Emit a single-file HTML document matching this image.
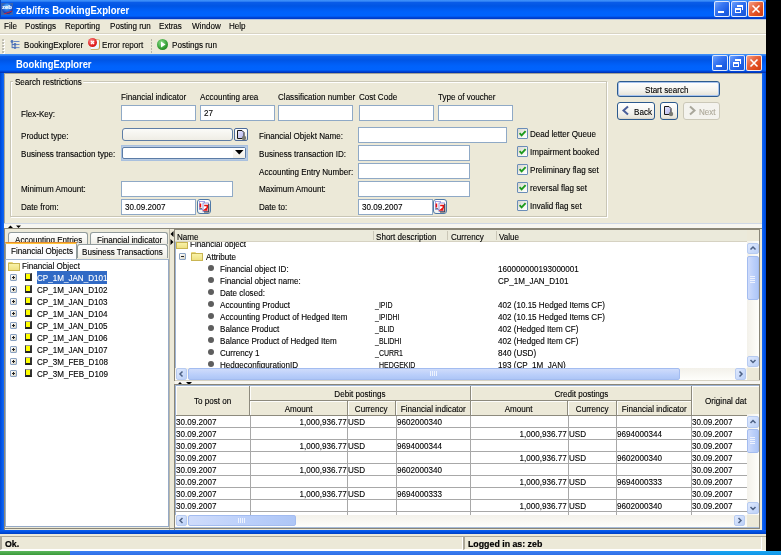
<!DOCTYPE html>
<html><head><meta charset="utf-8"><style>
*{box-sizing:border-box;margin:0;padding:0}
html,body{width:781px;height:555px;overflow:hidden;background:#000}
body{position:relative;font-family:"Liberation Sans",sans-serif;font-size:8.5px;color:#000;will-change:transform}
.a{position:absolute}
.t{position:absolute;white-space:nowrap;line-height:10px;transform:scaleX(0.95);transform-origin:0 0;-webkit-text-stroke:0.12px currentColor}
.ts{display:inline-block;white-space:nowrap;line-height:10px;transform:scaleX(0.95);-webkit-text-stroke:0.12px currentColor}
.tb{background:linear-gradient(#3d8ff9 0,#3a8cf8 1px,#0a5ce8 2.5px,#0055e4 6px,#005cf2 9px,#0062fb 12px,#0063fd 16px,#0045d6 17.5px,#0039c4 19px)}
.inp{position:absolute;background:#fff;border:1px solid #8fa9c6}
.xb{position:absolute;width:15px;height:15px;border:1px solid rgba(255,255,255,0.85);border-radius:2px;background:linear-gradient(135deg,#6fa2fb 0,#3b78f2 35%,#1e5fe6 70%,#1a56d6)}
.xc{background:linear-gradient(135deg,#f4a088 0,#e86a45 35%,#e04a1c 70%,#cc3f17)}
.cb{position:absolute;width:11px;height:11px;border:1px solid #6a8db8;border-radius:1px;background:linear-gradient(135deg,#d6d6cd,#f7f7f3 70%,#fff)}
.btn{position:absolute;border:1px solid #2c5a8e;border-radius:3px;background:linear-gradient(#fff,#f4f3ee 60%,#e8e6dc 90%,#d6d0c5)}
.sbb{position:absolute;background:linear-gradient(135deg,#dfe9fd,#bcd1f8);border:1px solid #b7cbf1;border-radius:2px}
.sbt{position:absolute;background:linear-gradient(90deg,#cfdcfb,#b9cefa 60%,#aec6f6);border:1px solid #a3bcf0;border-radius:2px}
</style></head><body>
<div class="a" style="left:0px;top:0px;width:766px;height:551px;background:#ece9d8"></div>
<div class="a tb" style="left:0px;top:0px;width:766px;height:19px;"></div>
<div class="a" style="left:0px;top:0px;width:1px;height:19px;background:#0841b8"></div>
<div class="a" style="left:0px;top:19px;width:766px;height:1px;background:#b9c6dc"></div>
<div class="a" style="left:1px;top:3px;width:12px;height:12px;background:#3a66b0"></div>
<div class="a" style="left:2px;top:3px;width:11px;height:11px;border-radius:50%;background:radial-gradient(circle at 45% 35%,#7fd0ff 0,#2a7ae8 35%,#1436b0 70%,#0b2a90)"></div>
<div class="t" style="left:2px;top:4px;font-size:6px;font-weight:bold;color:#fff;line-height:7px;transform:none">zeb</div>
<div class="a" style="left:4px;top:12px;width:8px;height:1px;background:#e02020;transform:rotate(-20deg)"></div>
<div class="t" style="left:16px;top:4.5px;font-size:10.2px;font-weight:bold;color:#fff;line-height:11px;transform:scaleX(0.94);-webkit-text-stroke:0">zeb/ifrs BookingExplorer</div>
<div class="xb" style="left:714px;top:1px;width:16px;height:16px;"></div>
<div class="a" style="left:718px;top:11px;width:6px;height:2px;background:#fff"></div>
<div class="xb" style="left:731px;top:1px;width:16px;height:16px;"></div>
<div class="a" style="left:735px;top:8px;width:6px;height:5px;border:1px solid #fff;border-top-width:2px"></div>
<div class="a" style="left:737px;top:5px;width:6px;height:5px;border:1px solid #fff;border-top-width:2px;border-left:none;border-bottom:none"></div>
<div class="xb xc" style="left:748px;top:1px;width:16px;height:16px;"></div>
<svg class="a" style="left:748px;top:1px" width="16" height="16"><path d="M4.5 4.5L11.5 11.5M11.5 4.5L4.5 11.5" stroke="#fff" stroke-width="1.6"/></svg>
<div class="t" style="left:4px;top:21px;">File</div>
<div class="t" style="left:25px;top:21px;">Postings</div>
<div class="t" style="left:65px;top:21px;">Reporting</div>
<div class="t" style="left:110px;top:21px;">Posting run</div>
<div class="t" style="left:159px;top:21px;">Extras</div>
<div class="t" style="left:192px;top:21px;">Window</div>
<div class="t" style="left:229px;top:21px;">Help</div>
<div class="a" style="left:0px;top:33px;width:766px;height:1px;background:#d8d4c4"></div>
<div class="a" style="left:0px;top:34px;width:766px;height:1px;background:#fff"></div>
<div class="a" style="left:2px;top:39px;width:2px;height:2px;background:#c1bfb3;box-shadow:1px 1px 0 #fff"></div>
<div class="a" style="left:2px;top:42px;width:2px;height:2px;background:#c1bfb3;box-shadow:1px 1px 0 #fff"></div>
<div class="a" style="left:2px;top:45px;width:2px;height:2px;background:#c1bfb3;box-shadow:1px 1px 0 #fff"></div>
<div class="a" style="left:2px;top:48px;width:2px;height:2px;background:#c1bfb3;box-shadow:1px 1px 0 #fff"></div>
<div class="a" style="left:2px;top:51px;width:2px;height:2px;background:#c1bfb3;box-shadow:1px 1px 0 #fff"></div>
<svg class="a" style="left:10px;top:39px" width="12" height="11"><g fill="#5073b8"><circle cx="2" cy="2.5" r="1.4"/><rect x="1.6" y="2.5" width="1" height="6.6"/><circle cx="5" cy="5.5" r="1.4"/><circle cx="5" cy="8.6" r="1.4"/><rect x="2" y="5" width="3" height="1"/><rect x="2" y="8.1" width="3" height="1"/><rect x="3.5" y="2" width="6" height="1" fill="#6b8ac6"/><rect x="6" y="5" width="3.5" height="1" fill="#6b8ac6"/><rect x="6" y="8.1" width="3.5" height="1" fill="#6b8ac6"/></g></svg>
<div class="t" style="left:24px;top:40px;">BookingExplorer</div>
<div class="a" style="left:90px;top:39px;width:10px;height:11px;background:linear-gradient(135deg,#fff,#e4f4fb);border:1px solid #d9e6ea;border-right:1px solid #c8a050;border-top-color:#d8c089;border-bottom:1px solid #c8b070;border-radius:1px 2px 3px 1px"></div>
<div class="a" style="left:88px;top:38px;width:9px;height:9px;border-radius:50%;background:radial-gradient(circle at 40% 35%,#ff9a9a,#e01c1c 60%,#b80a0a)"></div>
<svg class="a" style="left:88px;top:38px" width="9" height="9"><path d="M3 3L6 6M6 3L3 6" stroke="#fff" stroke-width="1.2"/></svg>
<div class="t" style="left:102px;top:40px;">Error report</div>
<div class="a" style="left:151px;top:39px;width:1px;height:2px;background:#b8b6aa"></div>
<div class="a" style="left:151px;top:42px;width:1px;height:2px;background:#b8b6aa"></div>
<div class="a" style="left:151px;top:45px;width:1px;height:2px;background:#b8b6aa"></div>
<div class="a" style="left:151px;top:48px;width:1px;height:2px;background:#b8b6aa"></div>
<div class="a" style="left:151px;top:51px;width:1px;height:2px;background:#b8b6aa"></div>
<div class="a" style="left:157px;top:39px;width:11px;height:11px;border-radius:50%;background:radial-gradient(circle at 40% 35%,#8fe08f,#2f9a2f 60%,#1a6e1a)"></div>
<svg class="a" style="left:157px;top:39px" width="11" height="11"><path d="M4 2.5L8.5 5.5L4 8.5Z" fill="#fff"/></svg>
<div class="t" style="left:172px;top:40px;">Postings run</div>
<div class="a" style="left:0px;top:54px;width:766px;height:482px;background:#0054e3"></div>
<div class="a tb" style="left:0px;top:54px;width:766px;height:19px;"></div>
<div class="a" style="left:0px;top:72px;width:766px;height:1px;background:#0036b8"></div>
<div class="t" style="left:15.5px;top:58.5px;font-size:10.2px;font-weight:bold;color:#fff;line-height:11px;transform:scaleX(0.92);-webkit-text-stroke:0">BookingExplorer</div>
<div class="xb" style="left:712px;top:55px;width:16px;height:16px;"></div>
<div class="a" style="left:716px;top:65px;width:6px;height:2px;background:#fff"></div>
<div class="xb" style="left:729px;top:55px;width:16px;height:16px;"></div>
<div class="a" style="left:733px;top:62px;width:6px;height:5px;border:1px solid #fff;border-top-width:2px"></div>
<div class="a" style="left:735px;top:59px;width:6px;height:5px;border:1px solid #fff;border-top-width:2px;border-left:none;border-bottom:none"></div>
<div class="xb xc" style="left:746px;top:55px;width:16px;height:16px;"></div>
<svg class="a" style="left:746px;top:55px" width="16" height="16"><path d="M4.5 4.5L11.5 11.5M11.5 4.5L4.5 11.5" stroke="#fff" stroke-width="1.6"/></svg>
<div class="a" style="left:0px;top:73px;width:4px;height:457px;background:linear-gradient(90deg,#0045cf,#0058ee 50%,#1767f0)"></div>
<div class="a" style="left:762px;top:73px;width:4px;height:457px;background:linear-gradient(90deg,#1767f0,#0058ee 50%,#0045cf)"></div>
<div class="a" style="left:4px;top:73px;width:758px;height:457px;background:#ece9d8"></div>
<div class="a" style="left:4px;top:73px;width:758px;height:1px;background:#a7a597"></div>
<div class="a" style="left:4px;top:73px;width:1px;height:457px;background:#a7a597"></div>
<div class="a" style="left:10px;top:81px;width:597px;height:136px;border:1px solid #c9c6b6;box-shadow:inset 1px 1px 0 #fff,1px 1px 0 #fff"></div>
<div class="t" style="left:13px;top:77px;padding:0 2px;background:#ece9d8">Search restrictions</div>
<div class="t" style="left:121px;top:92px;">Financial indicator</div>
<div class="t" style="left:200px;top:92px;">Accounting area</div>
<div class="t" style="left:278px;top:92px;">Classification number</div>
<div class="t" style="left:359px;top:92px;">Cost Code</div>
<div class="t" style="left:438px;top:92px;">Type of voucher</div>
<div class="t" style="left:21px;top:109px;">Flex-Key:</div>
<div class="inp" style="left:121px;top:105px;width:75px;height:16px"></div>
<div class="inp" style="left:200px;top:105px;width:75px;height:16px"></div>
<div class="inp" style="left:278px;top:105px;width:75px;height:16px"></div>
<div class="inp" style="left:359px;top:105px;width:75px;height:16px"></div>
<div class="inp" style="left:438px;top:105px;width:75px;height:16px"></div>
<div class="t" style="left:204px;top:108px;">27</div>
<div class="t" style="left:21px;top:131px;">Product type:</div>
<div class="inp" style="left:122px;top:128px;width:111px;height:13px;border-radius:3px;background:linear-gradient(#fbfbf8,#efede5);border-color:#5e7ea6"></div>
<div class="a" style="left:234px;top:128px;width:14px;height:13px;border:1px solid #4b6a9a;border-radius:2px;background:linear-gradient(#fff,#eceae0)"></div>
<svg class="a" style="left:236px;top:129px" width="11" height="12"><defs><linearGradient id="pg" x1="0" y1="0" x2="1" y2="1"><stop offset="0" stop-color="#e6e6ff"/><stop offset="1" stop-color="#b4b4ea"/></linearGradient></defs><path d="M1.5 1.5H6L8 3.5V9.5H1.5Z" fill="url(#pg)" stroke="#1a1a1a" stroke-width="1"/><circle cx="8" cy="9" r="2.2" fill="#7a7a72"/></svg>
<div class="t" style="left:21px;top:149px;">Business transaction type:</div>
<div class="inp" style="left:121px;top:145px;width:127px;height:16px;border-color:#a9c0de;background:#b9cce4"></div>
<div class="a" style="left:122px;top:147px;width:124px;height:12px;border:1px solid #5c7ca6;border-radius:2px;background:#fff"></div>
<div class="a" style="left:233px;top:148px;width:12px;height:10px;background:linear-gradient(#fefefe,#f1eee6)"></div>
<svg class="a" style="left:235px;top:150px" width="9" height="5"><path d="M0 0H8.5L4.25 4.5Z" fill="#000"/></svg>
<div class="t" style="left:21px;top:184px;">Minimum Amount:</div>
<div class="inp" style="left:121px;top:181px;width:112px;height:16px"></div>
<div class="t" style="left:21px;top:202px;">Date from:</div>
<div class="inp" style="left:121px;top:199px;width:75px;height:16px"></div>
<div class="t" style="left:125px;top:201.5px;">30.09.2007</div>
<div class="a" style="left:197px;top:199px;width:14px;height:15px;border:1px solid #4f79a8;border-radius:3px;background:linear-gradient(#fff,#f3f3f0)"></div>
<svg class="a" style="left:197px;top:199px" width="14" height="15"><rect x="2.5" y="2.5" width="5" height="8" fill="#fff" stroke="#8f8fe0" stroke-width="0.8"/><rect x="2.6" y="4.5" width="1.6" height="4" fill="#e81010"/><rect x="2.6" y="9" width="2.5" height="1.2" fill="#777"/><rect x="6" y="4" width="5.5" height="8.5" fill="#fff" stroke="#7a7ad0" stroke-width="0.8"/><path d="M11.8 5V13H7" stroke="#333" stroke-width="1" fill="none"/><path d="M7.2 6.5H10.3V8.8L7.6 11H10.6" stroke="#e81010" stroke-width="1.5" fill="none"/></svg>
<div class="t" style="left:259px;top:131px;">Financial Objekt Name:</div>
<div class="inp" style="left:358px;top:127px;width:149px;height:16px"></div>
<div class="t" style="left:259px;top:149px;">Business transaction ID:</div>
<div class="inp" style="left:358px;top:145px;width:112px;height:16px"></div>
<div class="t" style="left:259px;top:167px;">Accounting Entry Number:</div>
<div class="inp" style="left:358px;top:163px;width:112px;height:16px"></div>
<div class="t" style="left:259px;top:184px;">Maximum Amount:</div>
<div class="inp" style="left:358px;top:181px;width:112px;height:16px"></div>
<div class="t" style="left:259px;top:202px;">Date to:</div>
<div class="inp" style="left:358px;top:199px;width:75px;height:16px"></div>
<div class="t" style="left:362px;top:201.5px;">30.09.2007</div>
<div class="a" style="left:433px;top:199px;width:14px;height:15px;border:1px solid #4f79a8;border-radius:3px;background:linear-gradient(#fff,#f3f3f0)"></div>
<svg class="a" style="left:433px;top:199px" width="14" height="15"><rect x="2.5" y="2.5" width="5" height="8" fill="#fff" stroke="#8f8fe0" stroke-width="0.8"/><rect x="2.6" y="4.5" width="1.6" height="4" fill="#e81010"/><rect x="2.6" y="9" width="2.5" height="1.2" fill="#777"/><rect x="6" y="4" width="5.5" height="8.5" fill="#fff" stroke="#7a7ad0" stroke-width="0.8"/><path d="M11.8 5V13H7" stroke="#333" stroke-width="1" fill="none"/><path d="M7.2 6.5H10.3V8.8L7.6 11H10.6" stroke="#e81010" stroke-width="1.5" fill="none"/></svg>
<div class="cb" style="left:517px;top:128px;width:11px;height:11px;"></div>
<svg class="a" style="left:517px;top:128px" width="11" height="11"><path d="M2.6 5.2L4.6 7.3L8.6 3.2" stroke="#1c9a1c" stroke-width="1.9" fill="none"/></svg>
<div class="t" style="left:530px;top:129px;">Dead letter Queue</div>
<div class="cb" style="left:517px;top:146px;width:11px;height:11px;"></div>
<svg class="a" style="left:517px;top:146px" width="11" height="11"><path d="M2.6 5.2L4.6 7.3L8.6 3.2" stroke="#1c9a1c" stroke-width="1.9" fill="none"/></svg>
<div class="t" style="left:530px;top:147px;">Impairment booked</div>
<div class="cb" style="left:517px;top:164px;width:11px;height:11px;"></div>
<svg class="a" style="left:517px;top:164px" width="11" height="11"><path d="M2.6 5.2L4.6 7.3L8.6 3.2" stroke="#1c9a1c" stroke-width="1.9" fill="none"/></svg>
<div class="t" style="left:530px;top:165px;">Preliminary flag set</div>
<div class="cb" style="left:517px;top:182px;width:11px;height:11px;"></div>
<svg class="a" style="left:517px;top:182px" width="11" height="11"><path d="M2.6 5.2L4.6 7.3L8.6 3.2" stroke="#1c9a1c" stroke-width="1.9" fill="none"/></svg>
<div class="t" style="left:530px;top:183px;">reversal flag set</div>
<div class="cb" style="left:517px;top:200px;width:11px;height:11px;"></div>
<svg class="a" style="left:517px;top:200px" width="11" height="11"><path d="M2.6 5.2L4.6 7.3L8.6 3.2" stroke="#1c9a1c" stroke-width="1.9" fill="none"/></svg>
<div class="t" style="left:530px;top:201px;">Invalid flag set</div>
<div class="btn" style="left:617px;top:81px;width:103px;height:16px;box-shadow:inset 0 0 0 1px #a8c4ef"></div>
<div class="t" style="left:645px;top:85px;">Start search</div>
<div class="btn" style="left:617px;top:102px;width:38px;height:18px;"></div>
<svg class="a" style="left:620px;top:104px" width="12" height="13"><path d="M8 2.5L3.5 6.5L8 10.5" stroke="#4a5f9a" stroke-width="2" fill="none"/></svg>
<div class="t" style="left:634px;top:107px;">Back</div>
<div class="btn" style="left:660px;top:102px;width:18px;height:18px;"></div>
<svg class="a" style="left:663px;top:105px" width="11" height="12"><path d="M1.5 1.5H6L8 3.5V9.5H1.5Z" fill="url(#pg)" stroke="#1a1a1a" stroke-width="1"/><circle cx="8" cy="9" r="2.2" fill="#7a7a72"/></svg>
<div class="a" style="left:683px;top:102px;width:37px;height:18px;border:1px solid #cbc8b8;border-radius:3px;background:#f4f3ee"></div>
<svg class="a" style="left:686px;top:104px" width="12" height="13"><path d="M4 2.5L8.5 6.5L4 10.5" stroke="#a9a79b" stroke-width="2" fill="none"/></svg>
<div class="t" style="left:699px;top:107px;color:#aca899">Next</div>
<div class="a" style="left:4px;top:223px;width:758px;height:1px;background:#cfd8e6"></div>
<div class="a" style="left:4px;top:224px;width:758px;height:4px;background:#f7f6f1"></div>
<svg class="a" style="left:6px;top:225px" width="20" height="4"><path d="M2 3H7L4.5 0.5Z M10 0.5H15L12.5 3Z" fill="#000"/></svg>
<div class="a" style="left:4px;top:228px;width:758px;height:1px;background:#8a8678"></div>
<div class="a" style="left:4px;top:229px;width:1px;height:301px;background:#8a8678"></div>
<div class="a" style="left:169px;top:229px;width:1px;height:301px;background:#b9b6a8"></div>
<div class="a" style="left:8px;top:232px;width:80px;height:12px;border:1px solid #919b9c;border-bottom:none;border-radius:3px 3px 0 0;background:linear-gradient(#fff,#f5f4ef 70%,#ecebe4)"></div>
<div class="t" style="left:15px;top:235px;">Accounting Entries</div>
<div class="a" style="left:90px;top:232px;width:78px;height:12px;border:1px solid #919b9c;border-bottom:none;border-radius:3px 3px 0 0;background:linear-gradient(#fff,#f5f4ef 70%,#ecebe4)"></div>
<div class="t" style="left:97px;top:235px;">Financial indicator</div>
<div class="a" style="left:77px;top:244px;width:91px;height:14px;border:1px solid #919b9c;border-bottom:none;border-radius:3px 3px 0 0;background:linear-gradient(#fff,#f5f4ef 70%,#ecebe4)"></div>
<div class="t" style="left:82px;top:247px;">Business Transactions</div>
<div class="a" style="left:5px;top:242px;width:72px;height:17px;border-left:1px solid #919b9c;border-right:1px solid #919b9c;background:#fcfcfe;border-radius:3px 3px 0 0"></div>
<div class="a" style="left:5px;top:242px;width:72px;height:1px;background:#e68b2c;border-radius:3px 3px 0 0"></div>
<div class="a" style="left:6px;top:243px;width:70px;height:1px;background:#ffc73c"></div>
<div class="t" style="left:11px;top:246px;">Financial Objects</div>
<div class="a" style="left:5px;top:259px;width:164px;height:268px;background:#fff;border:1px solid #95a9c6;border-top-color:#a5b7cf"></div>
<div class="a" style="left:8px;top:262px;width:5px;height:2px;background:#e8d87a;border-radius:1px 1px 0 0"></div>
<div class="a" style="left:8px;top:263px;width:12px;height:8px;background:linear-gradient(#f8f2a8,#efe182);border:1px solid #c9b553"></div>
<div class="t" style="left:22px;top:261px;">Financial Object</div>
<div class="a" style="left:10px;top:274px;width:7px;height:7px;border:1px solid #8aa2c2;border-radius:1px;background:linear-gradient(135deg,#fff,#d8d4c4)"></div>
<div class="a" style="left:12px;top:277px;width:3px;height:1px;background:#222"></div>
<div class="a" style="left:13px;top:276px;width:1px;height:3px;background:#222"></div>
<div class="a" style="left:25px;top:273px;width:7px;height:8px;background:#ffff00;border:1px solid #9a9a9a;border-left:1px solid #333;border-right:2px solid #333;border-bottom:2px solid #222"></div>
<div class="a" style="left:37px;top:271px;width:70px;height:13px;background:#316ac5"></div>
<div class="t" style="left:37px;top:273px;color:#fff">CP_1M_JAN_D101</div>
<div class="a" style="left:10px;top:286px;width:7px;height:7px;border:1px solid #8aa2c2;border-radius:1px;background:linear-gradient(135deg,#fff,#d8d4c4)"></div>
<div class="a" style="left:12px;top:289px;width:3px;height:1px;background:#222"></div>
<div class="a" style="left:13px;top:288px;width:1px;height:3px;background:#222"></div>
<div class="a" style="left:25px;top:285px;width:7px;height:8px;background:#ffff00;border:1px solid #9a9a9a;border-left:1px solid #333;border-right:2px solid #333;border-bottom:2px solid #222"></div>
<div class="t" style="left:37px;top:285px;">CP_1M_JAN_D102</div>
<div class="a" style="left:10px;top:298px;width:7px;height:7px;border:1px solid #8aa2c2;border-radius:1px;background:linear-gradient(135deg,#fff,#d8d4c4)"></div>
<div class="a" style="left:12px;top:301px;width:3px;height:1px;background:#222"></div>
<div class="a" style="left:13px;top:300px;width:1px;height:3px;background:#222"></div>
<div class="a" style="left:25px;top:297px;width:7px;height:8px;background:#ffff00;border:1px solid #9a9a9a;border-left:1px solid #333;border-right:2px solid #333;border-bottom:2px solid #222"></div>
<div class="t" style="left:37px;top:297px;">CP_1M_JAN_D103</div>
<div class="a" style="left:10px;top:310px;width:7px;height:7px;border:1px solid #8aa2c2;border-radius:1px;background:linear-gradient(135deg,#fff,#d8d4c4)"></div>
<div class="a" style="left:12px;top:313px;width:3px;height:1px;background:#222"></div>
<div class="a" style="left:13px;top:312px;width:1px;height:3px;background:#222"></div>
<div class="a" style="left:25px;top:309px;width:7px;height:8px;background:#ffff00;border:1px solid #9a9a9a;border-left:1px solid #333;border-right:2px solid #333;border-bottom:2px solid #222"></div>
<div class="t" style="left:37px;top:309px;">CP_1M_JAN_D104</div>
<div class="a" style="left:10px;top:322px;width:7px;height:7px;border:1px solid #8aa2c2;border-radius:1px;background:linear-gradient(135deg,#fff,#d8d4c4)"></div>
<div class="a" style="left:12px;top:325px;width:3px;height:1px;background:#222"></div>
<div class="a" style="left:13px;top:324px;width:1px;height:3px;background:#222"></div>
<div class="a" style="left:25px;top:321px;width:7px;height:8px;background:#ffff00;border:1px solid #9a9a9a;border-left:1px solid #333;border-right:2px solid #333;border-bottom:2px solid #222"></div>
<div class="t" style="left:37px;top:321px;">CP_1M_JAN_D105</div>
<div class="a" style="left:10px;top:334px;width:7px;height:7px;border:1px solid #8aa2c2;border-radius:1px;background:linear-gradient(135deg,#fff,#d8d4c4)"></div>
<div class="a" style="left:12px;top:337px;width:3px;height:1px;background:#222"></div>
<div class="a" style="left:13px;top:336px;width:1px;height:3px;background:#222"></div>
<div class="a" style="left:25px;top:333px;width:7px;height:8px;background:#ffff00;border:1px solid #9a9a9a;border-left:1px solid #333;border-right:2px solid #333;border-bottom:2px solid #222"></div>
<div class="t" style="left:37px;top:333px;">CP_1M_JAN_D106</div>
<div class="a" style="left:10px;top:346px;width:7px;height:7px;border:1px solid #8aa2c2;border-radius:1px;background:linear-gradient(135deg,#fff,#d8d4c4)"></div>
<div class="a" style="left:12px;top:349px;width:3px;height:1px;background:#222"></div>
<div class="a" style="left:13px;top:348px;width:1px;height:3px;background:#222"></div>
<div class="a" style="left:25px;top:345px;width:7px;height:8px;background:#ffff00;border:1px solid #9a9a9a;border-left:1px solid #333;border-right:2px solid #333;border-bottom:2px solid #222"></div>
<div class="t" style="left:37px;top:345px;">CP_1M_JAN_D107</div>
<div class="a" style="left:10px;top:358px;width:7px;height:7px;border:1px solid #8aa2c2;border-radius:1px;background:linear-gradient(135deg,#fff,#d8d4c4)"></div>
<div class="a" style="left:12px;top:361px;width:3px;height:1px;background:#222"></div>
<div class="a" style="left:13px;top:360px;width:1px;height:3px;background:#222"></div>
<div class="a" style="left:25px;top:357px;width:7px;height:8px;background:#ffff00;border:1px solid #9a9a9a;border-left:1px solid #333;border-right:2px solid #333;border-bottom:2px solid #222"></div>
<div class="t" style="left:37px;top:357px;">CP_3M_FEB_D108</div>
<div class="a" style="left:10px;top:370px;width:7px;height:7px;border:1px solid #8aa2c2;border-radius:1px;background:linear-gradient(135deg,#fff,#d8d4c4)"></div>
<div class="a" style="left:12px;top:373px;width:3px;height:1px;background:#222"></div>
<div class="a" style="left:13px;top:372px;width:1px;height:3px;background:#222"></div>
<div class="a" style="left:25px;top:369px;width:7px;height:8px;background:#ffff00;border:1px solid #9a9a9a;border-left:1px solid #333;border-right:2px solid #333;border-bottom:2px solid #222"></div>
<div class="t" style="left:37px;top:369px;">CP_3M_FEB_D109</div>
<svg class="a" style="left:170px;top:230px" width="4" height="16"><path d="M3.5 1V7L0.5 4Z M0.5 9V15L3.5 12Z" fill="#000"/></svg>
<div class="a" style="left:174px;top:229px;width:1px;height:152px;background:#8a8678"></div>
<div class="a" style="left:175px;top:229px;width:585px;height:152px;background:#ece9d8"></div>
<div class="a" style="left:175px;top:229px;width:585px;height:1px;background:#8a8678"></div>
<div class="a" style="left:175px;top:230px;width:572px;height:138px;background:#fff;border-left:1px solid #9db3d3"></div>
<div class="a" style="left:175px;top:230px;width:572px;height:12px;background:#ebeadb;border-bottom:1px solid #d6d2c2"></div>
<div class="a" style="left:373px;top:231px;width:1px;height:9px;background:#cac7b7"></div>
<div class="a" style="left:447px;top:231px;width:1px;height:9px;background:#cac7b7"></div>
<div class="a" style="left:496px;top:231px;width:1px;height:9px;background:#cac7b7"></div>
<div class="t" style="left:177px;top:232px;">Name</div>
<div class="t" style="left:376px;top:232px;">Short description</div>
<div class="t" style="left:451px;top:232px;">Currency</div>
<div class="t" style="left:499px;top:232px;">Value</div>
<div class="a" style="left:176px;top:242px;width:571px;height:126px;overflow:hidden">
<div class="a" style="left:0px;top:-1px;width:5px;height:2px;background:#e8d87a;border-radius:1px 1px 0 0"></div>
<div class="a" style="left:0px;top:0px;width:12px;height:7px;background:linear-gradient(#f8f2a8,#efe182);border:1px solid #c9b553"></div>
<div class="t" style="left:14px;top:-3px;">Financial object</div>
<div class="a" style="left:3px;top:11px;width:7px;height:7px;border:1px solid #8aa2c2;border-radius:1px;background:linear-gradient(135deg,#fff,#d8d4c4)"></div>
<div class="a" style="left:5px;top:14px;width:3px;height:1px;background:#222"></div>
<div class="a" style="left:15px;top:10px;width:5px;height:2px;background:#e8d87a;border-radius:1px 1px 0 0"></div>
<div class="a" style="left:15px;top:11px;width:12px;height:8px;background:linear-gradient(#f8f2a8,#efe182);border:1px solid #c9b553"></div>
<div class="t" style="left:30px;top:10px;">Attribute</div>
<div class="a" style="left:32px;top:23px;width:6px;height:6px;background:#5e5e5e;border-radius:50%"></div>
<div class="t" style="left:44px;top:22px;">Financial object ID:</div>
<div class="t" style="left:322px;top:22px;">160000000193000001</div>
<div class="a" style="left:32px;top:35px;width:6px;height:6px;background:#5e5e5e;border-radius:50%"></div>
<div class="t" style="left:44px;top:34px;">Financial object name:</div>
<div class="t" style="left:322px;top:34px;">CP_1M_JAN_D101</div>
<div class="a" style="left:32px;top:47px;width:6px;height:6px;background:#5e5e5e;border-radius:50%"></div>
<div class="t" style="left:44px;top:46px;">Date closed:</div>
<div class="a" style="left:32px;top:59px;width:6px;height:6px;background:#5e5e5e;border-radius:50%"></div>
<div class="t" style="left:44px;top:58px;">Accounting Product</div>
<div class="t" style="left:199px;top:58px;transform:scaleX(0.82)">_IPID</div>
<div class="t" style="left:322px;top:58px;">402 (10.15 Hedged Items CF)</div>
<div class="a" style="left:32px;top:71px;width:6px;height:6px;background:#5e5e5e;border-radius:50%"></div>
<div class="t" style="left:44px;top:70px;">Accounting Product of Hedged Item</div>
<div class="t" style="left:199px;top:70px;transform:scaleX(0.82)">_IPIDHI</div>
<div class="t" style="left:322px;top:70px;">402 (10.15 Hedged Items CF)</div>
<div class="a" style="left:32px;top:83px;width:6px;height:6px;background:#5e5e5e;border-radius:50%"></div>
<div class="t" style="left:44px;top:82px;">Balance Product</div>
<div class="t" style="left:199px;top:82px;transform:scaleX(0.82)">_BLID</div>
<div class="t" style="left:322px;top:82px;">402 (Hedged Item CF)</div>
<div class="a" style="left:32px;top:95px;width:6px;height:6px;background:#5e5e5e;border-radius:50%"></div>
<div class="t" style="left:44px;top:94px;">Balance Product of Hedged Item</div>
<div class="t" style="left:199px;top:94px;transform:scaleX(0.82)">_BLIDHI</div>
<div class="t" style="left:322px;top:94px;">402 (Hedged Item CF)</div>
<div class="a" style="left:32px;top:107px;width:6px;height:6px;background:#5e5e5e;border-radius:50%"></div>
<div class="t" style="left:44px;top:106px;">Currency 1</div>
<div class="t" style="left:199px;top:106px;transform:scaleX(0.82)">_CURR1</div>
<div class="t" style="left:322px;top:106px;">840 (USD)</div>
<div class="a" style="left:32px;top:119px;width:6px;height:6px;background:#5e5e5e;border-radius:50%"></div>
<div class="t" style="left:44px;top:118px;">HedgeconfigurationID</div>
<div class="t" style="left:203px;top:118px;transform:scaleX(0.82)">HEDGEKID</div>
<div class="t" style="left:322px;top:118px;">193 (CP_1M_JAN)</div>
</div>
<div class="a" style="left:747px;top:241px;width:12px;height:127px;background:linear-gradient(90deg,#f3f1ea,#fefefb)"></div>
<div class="sbb" style="left:747px;top:243px;width:12px;height:11px;"></div>
<svg class="a" style="left:747px;top:243px" width="12" height="11"><path d="M3.5 6.5L6 4L8.5 6.5" stroke="#4d6185" stroke-width="1.5" fill="none"/></svg>
<div class="sbt" style="left:747px;top:256px;width:12px;height:44px;"></div>
<div class="a" style="left:750px;top:276px;width:5px;height:1px;background:#eef3fe"></div>
<div class="a" style="left:750px;top:278px;width:5px;height:1px;background:#eef3fe"></div>
<div class="a" style="left:750px;top:280px;width:5px;height:1px;background:#eef3fe"></div>
<div class="a" style="left:750px;top:282px;width:5px;height:1px;background:#eef3fe"></div>
<div class="sbb" style="left:747px;top:356px;width:12px;height:11px;"></div>
<svg class="a" style="left:747px;top:356px" width="12" height="11"><path d="M3.5 4L6 6.5L8.5 4" stroke="#4d6185" stroke-width="1.5" fill="none"/></svg>
<div class="a" style="left:175px;top:368px;width:572px;height:12px;background:linear-gradient(#f3f1ea,#fefefb)"></div>
<div class="sbb" style="left:176px;top:368px;width:11px;height:12px;"></div>
<svg class="a" style="left:176px;top:368px" width="11" height="12"><path d="M6.5 3.5L4 6L6.5 8.5" stroke="#4d6185" stroke-width="1.5" fill="none"/></svg>
<div class="sbt" style="left:188px;top:368px;width:492px;height:12px;background:linear-gradient(#cfdcfb,#b9cefa 60%,#aec6f6)"></div>
<div class="a" style="left:430px;top:371px;width:1px;height:5px;background:#eef3fe"></div>
<div class="a" style="left:432px;top:371px;width:1px;height:5px;background:#eef3fe"></div>
<div class="a" style="left:434px;top:371px;width:1px;height:5px;background:#eef3fe"></div>
<div class="a" style="left:436px;top:371px;width:1px;height:5px;background:#eef3fe"></div>
<div class="sbb" style="left:735px;top:368px;width:11px;height:12px;"></div>
<svg class="a" style="left:735px;top:368px" width="11" height="12"><path d="M4.5 3.5L7 6L4.5 8.5" stroke="#4d6185" stroke-width="1.5" fill="none"/></svg>
<div class="a" style="left:759px;top:229px;width:1px;height:152px;background:#8a8678"></div>
<div class="a" style="left:175px;top:380px;width:585px;height:1px;background:#d6d2c2"></div>
<div class="a" style="left:175px;top:381px;width:585px;height:4px;background:#f7f6f1"></div>
<svg class="a" style="left:176px;top:381px" width="20" height="5"><path d="M1 4H7L4 1Z M10 1H16L13 4Z" fill="#000"/></svg>
<div class="a" style="left:174px;top:384px;width:586px;height:146px;background:#ece9d8;border-top:1px solid #8a8678;border-left:1px solid #8a8678"></div>
<div class="a" style="left:175px;top:385px;width:585px;height:1px;background:#9db3d3"></div>
<div class="a" style="left:175px;top:385px;width:1px;height:130px;background:#9db3d3"></div>
<div class="a" style="left:176px;top:416px;width:571px;height:99px;background:#fff"></div>
<div class="a" style="left:176px;top:386px;width:74px;height:30px;background:#ece9d8;border-right:1px solid #8d8a7d;border-bottom:1px solid #8d8a7d;box-shadow:inset 1px 1px 0 #fdfdfb"></div>
<div class="a" style="left:176px;top:396px;width:73px;height:10px;text-align:center"><span class="ts" style="transform-origin:50% 0;">To post on</span></div>
<div class="a" style="left:250px;top:386px;width:221px;height:15px;background:#ece9d8;border-right:1px solid #8d8a7d;border-bottom:1px solid #8d8a7d;box-shadow:inset 1px 1px 0 #fdfdfb"></div>
<div class="a" style="left:250px;top:389px;width:220px;height:10px;text-align:center"><span class="ts" style="transform-origin:50% 0;">Debit postings</span></div>
<div class="a" style="left:250px;top:401px;width:98px;height:15px;background:#ece9d8;border-right:1px solid #8d8a7d;border-bottom:1px solid #8d8a7d;box-shadow:inset 1px 1px 0 #fdfdfb"></div>
<div class="a" style="left:250px;top:404px;width:97px;height:10px;text-align:center"><span class="ts" style="transform-origin:50% 0;">Amount</span></div>
<div class="a" style="left:348px;top:401px;width:48px;height:15px;background:#ece9d8;border-right:1px solid #8d8a7d;border-bottom:1px solid #8d8a7d;box-shadow:inset 1px 1px 0 #fdfdfb"></div>
<div class="a" style="left:348px;top:404px;width:47px;height:10px;text-align:center"><span class="ts" style="transform-origin:50% 0;">Currency</span></div>
<div class="a" style="left:396px;top:401px;width:75px;height:15px;background:#ece9d8;border-right:1px solid #8d8a7d;border-bottom:1px solid #8d8a7d;box-shadow:inset 1px 1px 0 #fdfdfb"></div>
<div class="a" style="left:396px;top:404px;width:74px;height:10px;text-align:center"><span class="ts" style="transform-origin:50% 0;">Financial indicator</span></div>
<div class="a" style="left:471px;top:386px;width:221px;height:15px;background:#ece9d8;border-right:1px solid #8d8a7d;border-bottom:1px solid #8d8a7d;box-shadow:inset 1px 1px 0 #fdfdfb"></div>
<div class="a" style="left:471px;top:389px;width:220px;height:10px;text-align:center"><span class="ts" style="transform-origin:50% 0;">Credit postings</span></div>
<div class="a" style="left:471px;top:401px;width:97px;height:15px;background:#ece9d8;border-right:1px solid #8d8a7d;border-bottom:1px solid #8d8a7d;box-shadow:inset 1px 1px 0 #fdfdfb"></div>
<div class="a" style="left:471px;top:404px;width:96px;height:10px;text-align:center"><span class="ts" style="transform-origin:50% 0;">Amount</span></div>
<div class="a" style="left:568px;top:401px;width:49px;height:15px;background:#ece9d8;border-right:1px solid #8d8a7d;border-bottom:1px solid #8d8a7d;box-shadow:inset 1px 1px 0 #fdfdfb"></div>
<div class="a" style="left:568px;top:404px;width:48px;height:10px;text-align:center"><span class="ts" style="transform-origin:50% 0;">Currency</span></div>
<div class="a" style="left:617px;top:401px;width:75px;height:15px;background:#ece9d8;border-right:1px solid #8d8a7d;border-bottom:1px solid #8d8a7d;box-shadow:inset 1px 1px 0 #fdfdfb"></div>
<div class="a" style="left:617px;top:404px;width:74px;height:10px;text-align:center"><span class="ts" style="transform-origin:50% 0;">Financial indicator</span></div>
<div class="a" style="left:692px;top:386px;width:68px;height:30px;background:#ece9d8;border-right:1px solid #8d8a7d;border-bottom:1px solid #8d8a7d;box-shadow:inset 1px 1px 0 #fdfdfb"></div>
<div class="a" style="left:692px;top:396px;width:67px;height:10px;text-align:center"><span class="ts" style="transform-origin:50% 0;">Original dat</span></div>
<div class="a" style="left:175px;top:416px;width:572px;height:99px;overflow:hidden">
<div class="a" style="left:0px;top:11px;width:572px;height:1px;background:#a8a8a8"></div>
<div class="t" style="left:1px;top:1px;">30.09.2007</div>
<div class="a" style="left:-28px;top:1px;width:200px;height:10px;text-align:right"><span class="ts" style="transform-origin:100% 0;">1,000,936.77</span></div>
<div class="t" style="left:173px;top:1px;">USD</div>
<div class="t" style="left:222px;top:1px;">9602000340</div>
<div class="t" style="left:517px;top:1px;">30.09.2007</div>
<div class="a" style="left:0px;top:23px;width:572px;height:1px;background:#a8a8a8"></div>
<div class="t" style="left:1px;top:13px;">30.09.2007</div>
<div class="a" style="left:192px;top:13px;width:200px;height:10px;text-align:right"><span class="ts" style="transform-origin:100% 0;">1,000,936.77</span></div>
<div class="t" style="left:394px;top:13px;">USD</div>
<div class="t" style="left:442px;top:13px;">9694000344</div>
<div class="t" style="left:517px;top:13px;">30.09.2007</div>
<div class="a" style="left:0px;top:35px;width:572px;height:1px;background:#a8a8a8"></div>
<div class="t" style="left:1px;top:25px;">30.09.2007</div>
<div class="a" style="left:-28px;top:25px;width:200px;height:10px;text-align:right"><span class="ts" style="transform-origin:100% 0;">1,000,936.77</span></div>
<div class="t" style="left:173px;top:25px;">USD</div>
<div class="t" style="left:222px;top:25px;">9694000344</div>
<div class="t" style="left:517px;top:25px;">30.09.2007</div>
<div class="a" style="left:0px;top:47px;width:572px;height:1px;background:#a8a8a8"></div>
<div class="t" style="left:1px;top:37px;">30.09.2007</div>
<div class="a" style="left:192px;top:37px;width:200px;height:10px;text-align:right"><span class="ts" style="transform-origin:100% 0;">1,000,936.77</span></div>
<div class="t" style="left:394px;top:37px;">USD</div>
<div class="t" style="left:442px;top:37px;">9602000340</div>
<div class="t" style="left:517px;top:37px;">30.09.2007</div>
<div class="a" style="left:0px;top:59px;width:572px;height:1px;background:#a8a8a8"></div>
<div class="t" style="left:1px;top:49px;">30.09.2007</div>
<div class="a" style="left:-28px;top:49px;width:200px;height:10px;text-align:right"><span class="ts" style="transform-origin:100% 0;">1,000,936.77</span></div>
<div class="t" style="left:173px;top:49px;">USD</div>
<div class="t" style="left:222px;top:49px;">9602000340</div>
<div class="t" style="left:517px;top:49px;">30.09.2007</div>
<div class="a" style="left:0px;top:71px;width:572px;height:1px;background:#a8a8a8"></div>
<div class="t" style="left:1px;top:61px;">30.09.2007</div>
<div class="a" style="left:192px;top:61px;width:200px;height:10px;text-align:right"><span class="ts" style="transform-origin:100% 0;">1,000,936.77</span></div>
<div class="t" style="left:394px;top:61px;">USD</div>
<div class="t" style="left:442px;top:61px;">9694000333</div>
<div class="t" style="left:517px;top:61px;">30.09.2007</div>
<div class="a" style="left:0px;top:83px;width:572px;height:1px;background:#a8a8a8"></div>
<div class="t" style="left:1px;top:73px;">30.09.2007</div>
<div class="a" style="left:-28px;top:73px;width:200px;height:10px;text-align:right"><span class="ts" style="transform-origin:100% 0;">1,000,936.77</span></div>
<div class="t" style="left:173px;top:73px;">USD</div>
<div class="t" style="left:222px;top:73px;">9694000333</div>
<div class="t" style="left:517px;top:73px;">30.09.2007</div>
<div class="a" style="left:0px;top:95px;width:572px;height:1px;background:#a8a8a8"></div>
<div class="t" style="left:1px;top:85px;">30.09.2007</div>
<div class="a" style="left:192px;top:85px;width:200px;height:10px;text-align:right"><span class="ts" style="transform-origin:100% 0;">1,000,936.77</span></div>
<div class="t" style="left:394px;top:85px;">USD</div>
<div class="t" style="left:442px;top:85px;">9602000340</div>
<div class="t" style="left:517px;top:85px;">30.09.2007</div>
<div class="a" style="left:0px;top:107px;width:572px;height:1px;background:#a8a8a8"></div>
<div class="t" style="left:1px;top:97px;">30.09.2007</div>
<div class="a" style="left:-28px;top:97px;width:200px;height:10px;text-align:right"><span class="ts" style="transform-origin:100% 0;">1,000,936.77</span></div>
<div class="t" style="left:173px;top:97px;">USD</div>
<div class="t" style="left:222px;top:97px;">9602000340</div>
<div class="t" style="left:517px;top:97px;">30.09.2007</div>
<div class="a" style="left:75px;top:0px;width:1px;height:99px;background:#a8a8a8"></div>
<div class="a" style="left:172px;top:0px;width:1px;height:99px;background:#a8a8a8"></div>
<div class="a" style="left:221px;top:0px;width:1px;height:99px;background:#a8a8a8"></div>
<div class="a" style="left:295px;top:0px;width:1px;height:99px;background:#a8a8a8"></div>
<div class="a" style="left:393px;top:0px;width:1px;height:99px;background:#a8a8a8"></div>
<div class="a" style="left:441px;top:0px;width:1px;height:99px;background:#a8a8a8"></div>
<div class="a" style="left:516px;top:0px;width:1px;height:99px;background:#a8a8a8"></div>
</div>
<div class="a" style="left:747px;top:414px;width:12px;height:101px;background:linear-gradient(90deg,#f3f1ea,#fefefb)"></div>
<div class="sbb" style="left:747px;top:416px;width:12px;height:12px;"></div>
<svg class="a" style="left:747px;top:416px" width="12" height="12"><path d="M3.5 7L6 4.5L8.5 7" stroke="#4d6185" stroke-width="1.5" fill="none"/></svg>
<div class="sbt" style="left:747px;top:429px;width:12px;height:24px;"></div>
<div class="a" style="left:750px;top:437px;width:5px;height:1px;background:#eef3fe"></div>
<div class="a" style="left:750px;top:439px;width:5px;height:1px;background:#eef3fe"></div>
<div class="a" style="left:750px;top:441px;width:5px;height:1px;background:#eef3fe"></div>
<div class="a" style="left:750px;top:443px;width:5px;height:1px;background:#eef3fe"></div>
<div class="sbb" style="left:747px;top:502px;width:12px;height:12px;"></div>
<svg class="a" style="left:747px;top:502px" width="12" height="12"><path d="M3.5 5L6 7.5L8.5 5" stroke="#4d6185" stroke-width="1.5" fill="none"/></svg>
<div class="a" style="left:175px;top:515px;width:572px;height:12px;background:linear-gradient(#f3f1ea,#fefefb)"></div>
<div class="sbb" style="left:176px;top:515px;width:11px;height:11px;"></div>
<svg class="a" style="left:176px;top:515px" width="11" height="11"><path d="M6.5 3L4 5.5L6.5 8" stroke="#4d6185" stroke-width="1.5" fill="none"/></svg>
<div class="sbt" style="left:188px;top:515px;width:108px;height:11px;"></div>
<div class="a" style="left:238px;top:518px;width:1px;height:5px;background:#eef3fe"></div>
<div class="a" style="left:240px;top:518px;width:1px;height:5px;background:#eef3fe"></div>
<div class="a" style="left:242px;top:518px;width:1px;height:5px;background:#eef3fe"></div>
<div class="a" style="left:244px;top:518px;width:1px;height:5px;background:#eef3fe"></div>
<div class="sbb" style="left:734px;top:515px;width:11px;height:11px;"></div>
<svg class="a" style="left:734px;top:515px" width="11" height="11"><path d="M4.5 3L7 5.5L4.5 8" stroke="#4d6185" stroke-width="1.5" fill="none"/></svg>
<div class="a" style="left:175px;top:527px;width:585px;height:1px;background:#a6bbd8"></div>
<div class="a" style="left:759px;top:385px;width:1px;height:143px;background:#8a8678"></div>
<div class="a" style="left:4px;top:528px;width:756px;height:1px;background:#8a8678"></div>
<div class="a" style="left:0px;top:530px;width:766px;height:4px;background:linear-gradient(#0a5ef0,#0050e0 50%,#003fc4)"></div>
<div class="a" style="left:0px;top:534px;width:766px;height:17px;background:#ece9d8"></div>
<div class="a" style="left:0px;top:536px;width:766px;height:1px;background:#aca899"></div>
<div class="a" style="left:0px;top:537px;width:463px;height:13px;border-left:2px solid #aca899;border-right:1px solid #fff;border-bottom:1px solid #fff"></div>
<div class="a" style="left:463px;top:537px;width:299px;height:13px;border-left:2px solid #aca899;border-right:1px solid #fff;border-bottom:1px solid #fff"></div>
<div class="t" style="left:5px;top:539px;font-weight:bold;font-size:8.8px;transform:none;-webkit-text-stroke:0.2px #000">Ok.</div>
<div class="t" style="left:468px;top:539px;font-weight:bold;font-size:8.8px;transform:none;-webkit-text-stroke:0.2px #000">Logged in as: zeb</div>
<div class="a" style="left:0px;top:550px;width:766px;height:1px;background:#fff"></div>
<div class="a" style="left:0px;top:551px;width:781px;height:4px;background:linear-gradient(#3c81f3,#2f6ee6)"></div>
<div class="a" style="left:710px;top:551px;width:71px;height:4px;background:linear-gradient(#1ca6f0,#0f95e8)"></div>
<div class="a" style="left:0px;top:551px;width:70px;height:4px;background:linear-gradient(#5cb85c,#3a9a3a)"></div>
</body></html>
